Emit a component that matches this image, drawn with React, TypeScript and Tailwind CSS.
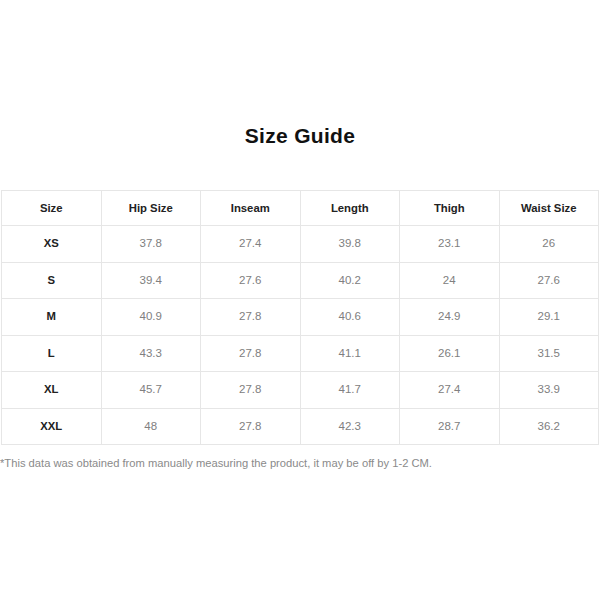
const headers = ["Size", "Hip Size", "Inseam", "Length", "Thigh", "Waist Size"];
const rows = [
  ["XS", "37.8", "27.4", "39.8", "23.1", "26"],
  ["S", "39.4", "27.6", "40.2", "24", "27.6"],
  ["M", "40.9", "27.8", "40.6", "24.9", "29.1"],
  ["L", "43.3", "27.8", "41.1", "26.1", "31.5"],
  ["XL", "45.7", "27.8", "41.7", "27.4", "33.9"],
  ["XXL", "48", "27.8", "42.3", "28.7", "36.2"],
];

export default function App() {
  return (
    <div
      className="w-[600px] h-[600px] bg-white pt-[123px]"
      style={{ fontFamily: '"Liberation Sans", Arial, sans-serif' }}
    >
      <h1 className="text-center text-[21px] font-bold text-[#111] leading-[26px] tracking-[0.3px]">
        Size Guide
      </h1>
      <div className="px-[1px] mt-[41px]">
        <table className="w-full border-collapse table-fixed">
          <thead>
            <tr className="h-[35px]">
              {headers.map((h) => (
                <th
                  key={h}
                  className="border border-[#e6e6e6] text-[11.3px] font-bold text-[#222] text-center"
                >
                  {h}
                </th>
              ))}
            </tr>
          </thead>
          <tbody>
            {rows.map((r) => (
              <tr key={r[0]} className="h-[36.5px]">
                {r.map((c, i) => (
                  <td
                    key={i}
                    className={
                      "border border-[#e6e6e6] text-center " +
                      (i === 0 ? "text-[11.3px] font-bold text-[#222]" : "text-[11.5px] text-[#808080]")
                    }
                  >
                    {c}
                  </td>
                ))}
              </tr>
            ))}
          </tbody>
        </table>
      </div>
      <p className="mt-[11px] text-[11.2px] text-[#8a8a8a] leading-[14px]">
        *This data was obtained from manually measuring the product, it may be off by 1-2 CM.
      </p>
    </div>
  );
}
